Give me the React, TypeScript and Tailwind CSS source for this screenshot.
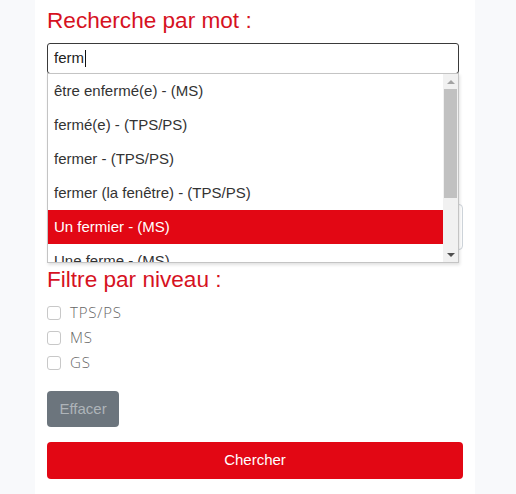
import React from "react";

const items = [
  "être enfermé(e) - (MS)",
  "fermé(e) - (TPS/PS)",
  "fermer - (TPS/PS)",
  "fermer (la fenêtre) - (TPS/PS)",
  "Un fermier - (MS)",
  "Une ferme - (MS)",
];

export default function App() {
  return (
    <div className="min-h-[494px] w-full bg-[#f8f9fb] flex" style={{ fontFamily: '"Liberation Sans", Arial, sans-serif' }}>
      <div className="ml-[35px] w-[440px] min-h-[494px] bg-white px-[12px] relative">
        <div className="h-[43px] flex items-center text-[22.6px] text-[#d6121f] leading-none">Recherche par mot :</div>
        <div className="relative w-[412px]">
          <div className="h-[31px] border border-[#3a3a3a] rounded-[3px] flex items-center pl-[6px] text-[15px] text-[#222]">
            <span>ferm</span>
            <span className="inline-block w-px h-[17px] bg-[#111] ml-px"></span>
          </div>
          <div className="absolute left-0 top-[30px] w-[412px] h-[190px] bg-white border border-[#c4c4c4] shadow-[1px_2px_3px_rgba(0,0,0,0.12)] flex overflow-hidden z-10">
            <div className="flex-1 flex flex-col">
              {items.map((t, i) => (
                <div
                  key={t}
                  className={
                    "h-[34px] shrink-0 flex items-center pl-[6px] text-[15px] " +
                    (i === 4 ? "bg-[#e20714] text-white" : "text-[#333]")
                  }
                >
                  {t}
                </div>
              ))}
            </div>
            <div className="w-[15px] bg-[#f1f1f1] flex flex-col items-center shrink-0">
              <div className="h-[15px] w-full flex items-center justify-center">
                <div className="w-0 h-0 border-l-[4px] border-r-[4px] border-b-[4px] border-l-transparent border-r-transparent border-b-[#a3a3a3]"></div>
              </div>
              <div className="w-[13px] h-[109px] bg-[#c1c1c1]"></div>
              <div className="flex-1"></div>
              <div className="h-[15px] w-full flex items-center justify-center">
                <div className="w-0 h-0 border-l-[4px] border-r-[4px] border-t-[4px] border-l-transparent border-r-transparent border-t-[#505050]"></div>
              </div>
            </div>
          </div>
        </div>
        <div className="h-[130px]"></div>
        <div className="h-[46px] w-full border border-[#ced4da] rounded-[4px]"></div>
        <div className="mt-[16px] h-[28px] flex items-center text-[22.6px] text-[#d6121f] leading-none">Filtre par niveau :</div>
        <div className="mt-[6px] flex flex-col" style={{ fontFamily: '"Open Sans", sans-serif' }}>
          {["TPS/PS", "MS", "GS"].map((l) => (
            <label key={l} className="h-[25px] flex items-center">
              <span className="w-[14px] h-[14px] border border-[#c8c8c8] rounded-[3px] bg-white"></span>
              <span className="ml-[9px] text-[15px] font-light tracking-[0.8px] text-[#666]">{l}</span>
            </label>
          ))}
        </div>
        <div className="mt-[16px]">
          <button className="h-[36px] w-[72px] rounded-[4px] bg-[#6c757d] text-[#aeb4b9] text-[15px]">Effacer</button>
        </div>
        <button className="mt-[15px] h-[37px] w-full rounded-[4px] bg-[#e20714] text-white text-[15px]">Chercher</button>
      </div>
    </div>
  );
}
